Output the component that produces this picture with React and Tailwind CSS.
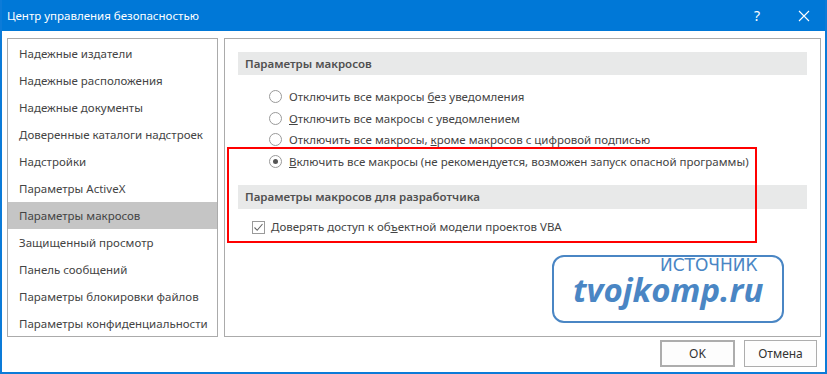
import React from "react";

const font = { fontFamily: '"Noto Sans", "Open Sans", sans-serif' };

const leftItems = [
  "Надежные издатели",
  "Надежные расположения",
  "Надежные документы",
  "Доверенные каталоги надстроек",
  "Надстройки",
  "Параметры ActiveX",
  "Параметры макросов",
  "Защищенный просмотр",
  "Панель сообщений",
  "Параметры блокировки файлов",
  "Параметры конфиденциальности",
];

function Radio({ checked }) {
  return (
    <span className="flex h-[13px] w-[13px] shrink-0 items-center justify-center rounded-full border border-[#9a9a9a] bg-white">
      {checked && <span className="h-[5px] w-[5px] rounded-full bg-[#555]" />}
    </span>
  );
}

function RadioRow({ checked, children }) {
  return (
    <div className="flex h-[21.5px] items-center gap-[7px] pl-[31px]">
      <Radio checked={checked} />
      <span className="whitespace-nowrap">{children}</span>
    </div>
  );
}

export default function App() {
  return (
    <div
      className="flex h-[374px] w-[827px] flex-col overflow-hidden border-x-2 border-b-2 border-[#0c7bd8] bg-white text-[11.5px] text-[#444]"
      style={font}
    >
      {/* title bar */}
      <div className="-mx-[2px] flex h-[31px] shrink-0 items-center bg-[#0078d7] pl-[7px] pr-[14px] text-white">
        <span className="flex-1 text-[11.5px]">Центр управления безопасностью</span>
        <span className="mr-[38px] text-[14px]">?</span>
        <svg width="12" height="12" viewBox="0 0 12 12" className="mr-[3px]">
          <path d="M1 1 L11 11 M11 1 L1 11" stroke="white" strokeWidth="1.1" />
        </svg>
      </div>

      {/* body */}
      <div className="flex flex-1 flex-col pl-[5px] pr-[4px] pt-[7px]">
        <div className="flex h-[299px] gap-[6px]">
          {/* left list */}
          <div className="h-full w-[211px] shrink-0 overflow-hidden border border-[#ababab]">
            <div className="pt-[1px]">
              {leftItems.map((t, i) => (
                <div
                  key={t}
                  className={`flex h-[27px] items-center whitespace-nowrap pl-[11px] ${i === 6 ? "bg-[#c5c5c5]" : ""}`}
                >
                  {t}
                </div>
              ))}
            </div>
          </div>

          {/* right panel */}
          <div className="relative h-full flex-1 border border-[#ababab] px-[13px] pt-[13px]">
            <div className="flex h-[23px] items-center bg-[#e8e9e9] pl-[7px] font-semibold text-[#505050]">
              Параметры макросов
            </div>
            <div className="pt-[11px]">
              <RadioRow>
                Отключить все макросы <u>б</u>ез уведомления
              </RadioRow>
              <RadioRow>
                <u>О</u>тключить все макросы с уведомлением
              </RadioRow>
              <RadioRow>
                Отключить все макросы, <u>к</u>роме макросов с цифровой подписью
              </RadioRow>
              <RadioRow checked>
                <u>В</u>ключить все макросы (не рекомендуется, возможен запуск опасной программы)
              </RadioRow>
            </div>
            <div className="mt-[13px] flex h-[24px] items-center bg-[#e8e9e9] pl-[7px] font-semibold text-[#505050]">
              Параметры макросов для разработчика
            </div>
            <div className="flex h-[36px] items-center gap-[6px] pl-[14px]">
              <span className="flex h-[13px] w-[13px] items-center justify-center border border-[#9a9a9a] bg-white">
                <svg width="11" height="11" viewBox="0 0 11 11">
                  <path d="M1.5 5.5 L4.2 8.3 L9.5 2" fill="none" stroke="#666" strokeWidth="1.1" />
                </svg>
              </span>
              <span>
                Доверять доступ к об<u>ъ</u>ектной модели проектов VBA
              </span>
            </div>

            {/* red annotation */}
            <div className="absolute left-[2px] top-[108px] h-[96px] w-[530px] border-2 border-[#ff0000]" />

            {/* watermark */}
            <div className="absolute left-[327px] top-[216px] h-[68px] w-[232px] rounded-[12px] border-2 border-[#4a86c4] bg-white">
              <div
                className="absolute left-[106px] top-[0px] text-[17px] leading-[17px] text-[#4a86c4]"
                style={{ fontFamily: '"DejaVu Sans", sans-serif' }}
              >
                ИСТОЧНИК
              </div>
              <div
                className="absolute left-[19px] top-[18px] text-[33px] font-bold italic leading-[30px] text-[#4a86c4]"
                style={{ fontFamily: '"Open Sans", sans-serif' }}
              >
                tvojkomp.ru
              </div>
            </div>
          </div>
        </div>

        {/* footer */}
        <div className="flex flex-1 items-start justify-end gap-[9px] pr-[4px] pt-[3px]">
          <button className="flex h-[27px] w-[75px] items-center justify-center border-2 border-[#adadad] bg-[#fdfdfd] text-[12px] text-[#333]">
            OK
          </button>
          <button className="flex h-[27px] w-[73px] items-center justify-center border border-[#adadad] bg-[#fdfdfd] text-[12px] text-[#333]">
            Отмена
          </button>
        </div>
      </div>
    </div>
  );
}
